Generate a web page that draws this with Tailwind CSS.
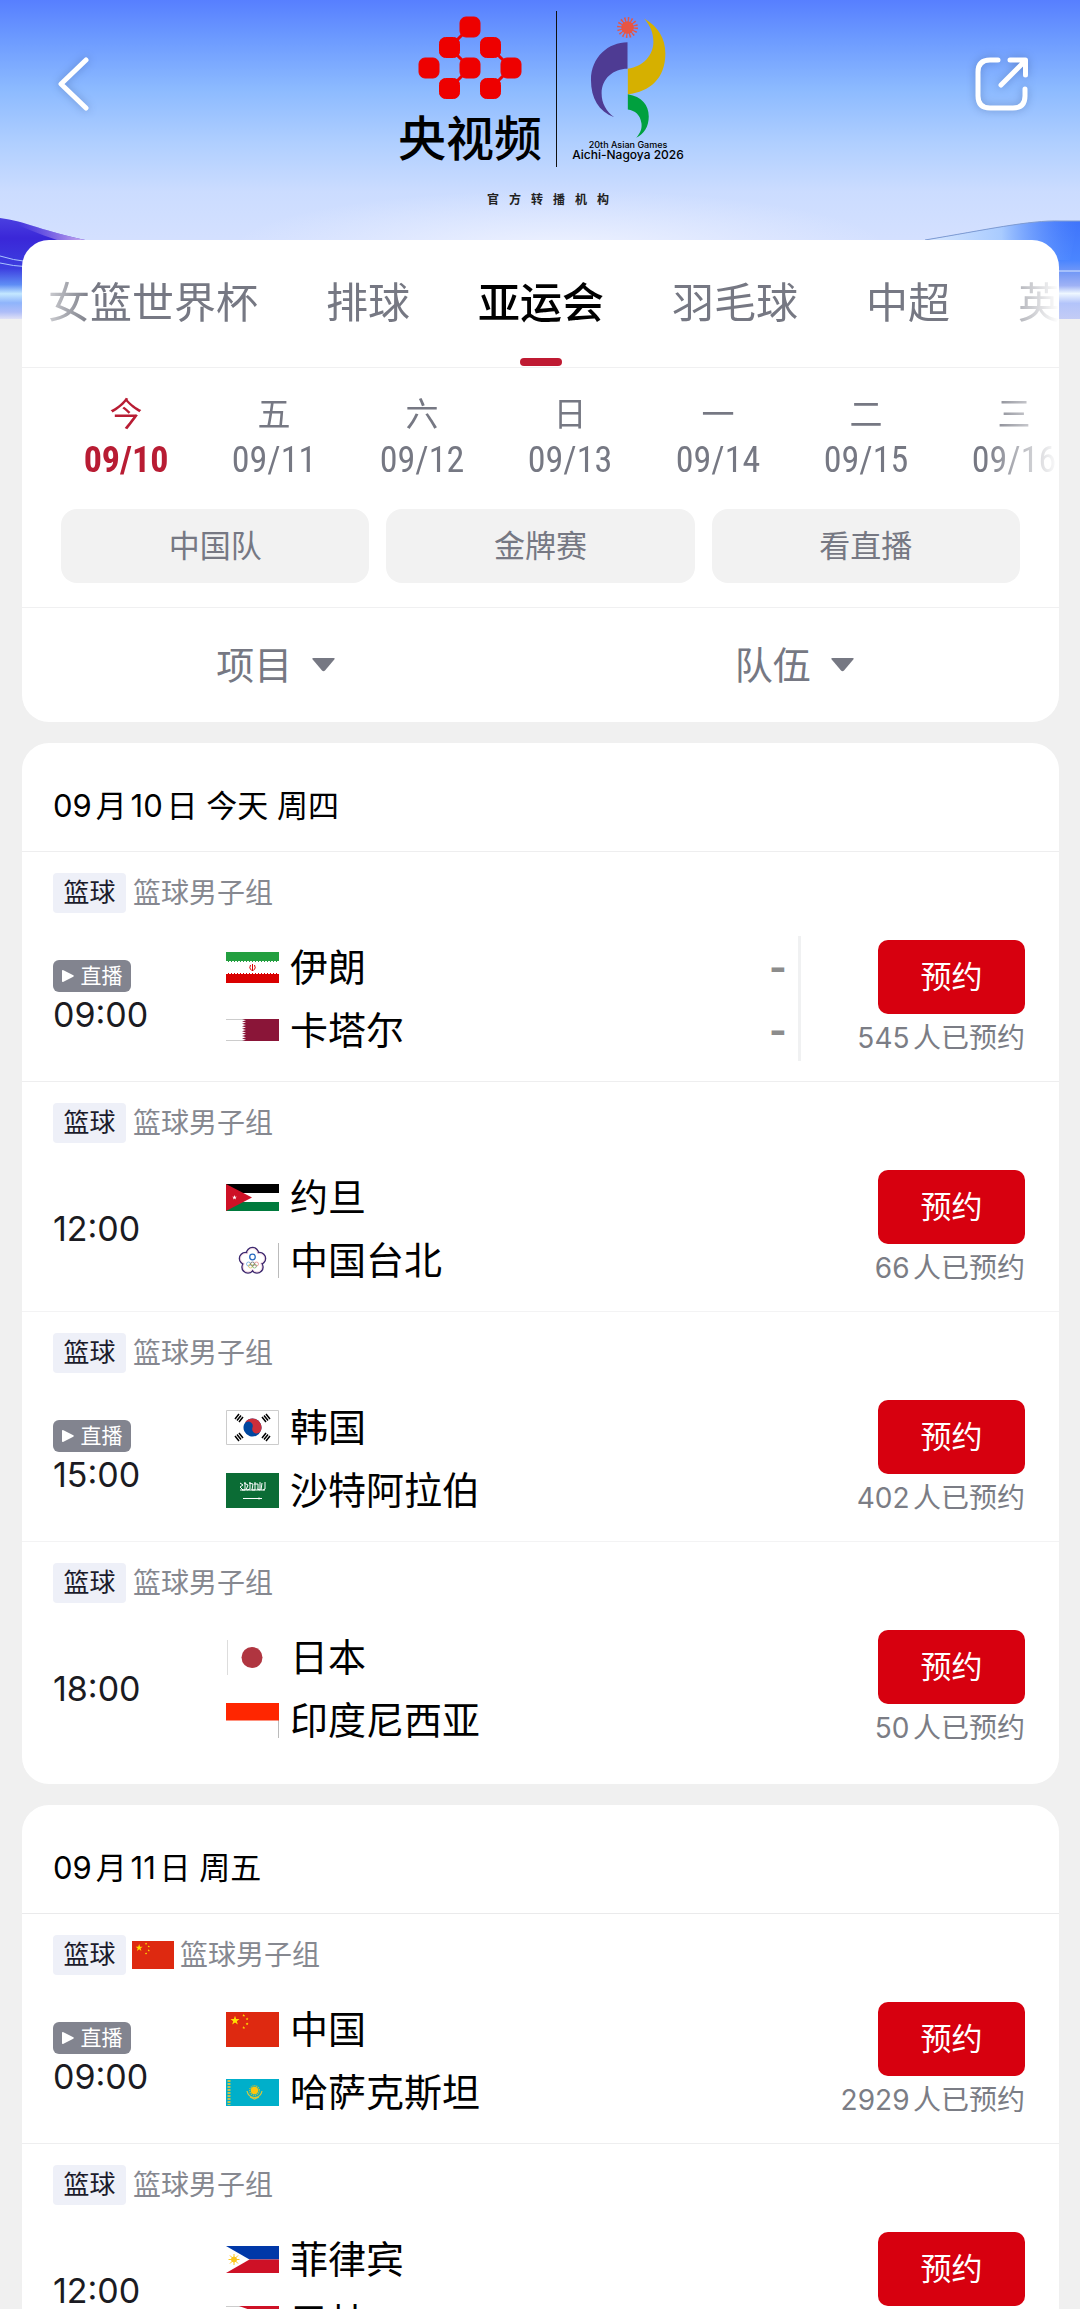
<!DOCTYPE html>
<html lang="zh-CN">
<head>
<meta charset="utf-8">
<meta name="viewport" content="width=device-width, initial-scale=1">
<title>亚运会赛程</title>
<script src="https://cdn.jsdelivr.net/npm/@tailwindcss/browser@4"></script>
</head>
<body class="bg-[#f0f0f0] font-['Inter','Noto_Sans_CJK_SC',sans-serif] text-black [text-autospace:normal]">

<!-- Shared flag artwork -->
<svg class="hidden" aria-hidden="true">
  <symbol id="star" viewBox="-10 -10 20 20"><path d="M0-10 2.4-3.1 9.5-3.1 3.8 1.2 5.9 8.1 0 4-5.9 8.1-3.8 1.2-9.5-3.1-2.4-3.1Z"/></symbol>
  <symbol id="flag-cn" viewBox="0 0 30 20" preserveAspectRatio="none">
    <path fill="#de2910" d="M0 0h30v20H0z"/>
    <g fill="#ffde00"><use href="#star" x="2.4" y="2.2" width="5.4" height="5.4"/><use href="#star" x="9.1" y="1" width="1.9" height="1.9"/><use href="#star" x="11" y="3" width="1.9" height="1.9"/><use href="#star" x="11" y="5.8" width="1.9" height="1.9"/><use href="#star" x="9.1" y="8" width="1.9" height="1.9"/></g>
  </symbol>
</svg>

<div class="relative h-screen overflow-hidden">

  <!-- Hero backdrop -->
  <svg class="absolute inset-x-0 top-0 h-[319px] w-full" viewBox="0 0 1080 319" preserveAspectRatio="none" aria-hidden="true">
    <defs>
      <linearGradient id="sky" x1="0" y1="0" x2="0" y2="1">
        <stop offset="0" stop-color="#577fff"/><stop offset=".12" stop-color="#6c9aff"/><stop offset=".28" stop-color="#8cbaff"/><stop offset=".45" stop-color="#b0cfff"/><stop offset=".6" stop-color="#cbdcff"/><stop offset="1" stop-color="#e2e7ff"/>
      </linearGradient>
      <radialGradient id="glow" cx=".5" cy=".5" r=".5"><stop offset="0" stop-color="#f5f7ff" stop-opacity=".8"/><stop offset="1" stop-color="#f0f3ff" stop-opacity="0"/></radialGradient>
      <linearGradient id="waveL" x1="0" y1="0" x2="0" y2="1">
        <stop offset="0" stop-color="#4a3fe0"/><stop offset=".2" stop-color="#3a27d8"/><stop offset=".5" stop-color="#3d3fe0"/><stop offset=".66" stop-color="#5f8df5"/><stop offset=".75" stop-color="#c4e8ff"/><stop offset=".84" stop-color="#8fb4fb"/><stop offset=".93" stop-color="#aebdf8"/><stop offset="1" stop-color="#e0e1f5"/>
      </linearGradient>
      <linearGradient id="waveR" x1="0" y1="0" x2="0" y2="1">
        <stop offset="0" stop-color="#3f74fb"/><stop offset=".4" stop-color="#4a85ff"/><stop offset=".55" stop-color="#7c9df5"/><stop offset=".66" stop-color="#9fb2f5"/><stop offset=".74" stop-color="#eef7ff"/><stop offset=".84" stop-color="#b3c4fa"/><stop offset="1" stop-color="#c3ccf5"/>
      </linearGradient>
      <linearGradient id="sheen" x1="0" y1="0" x2="1" y2="0"><stop offset="0" stop-color="#d9e8ff"/><stop offset=".5" stop-color="#b4d4ff" stop-opacity=".9"/><stop offset="1" stop-color="#5f94ff" stop-opacity="0"/></linearGradient>
      <linearGradient id="pink" x1="0" y1="0" x2="1" y2="0"><stop offset=".2" stop-color="#a48cf0" stop-opacity="0"/><stop offset="1" stop-color="#dcbcf0"/></linearGradient>
    </defs>
    <path fill="url(#sky)" d="M0 0h1080v319H0z"/>
    <ellipse fill="url(#glow)" cx="560" cy="250" rx="330" ry="60"/>
    <path fill="url(#waveL)" d="M0 218C25 221 45 232 90 241V319H0Z"/>
    <path fill="url(#pink)" d="M0 218C25 221 45 232 90 241H60C38 234 18 225 0 218Z"/>
    <path fill="none" stroke="#a9c4ff" stroke-width="1" d="M0 256Q12 260 30 262M0 263Q12 266 30 267"/>
    <path fill="url(#waveR)" d="M925 240C985 230 1030 220 1060 221H1080V319H925Z"/>
    <path fill="url(#sheen)" d="M925 240C985 230 1030 220 1060 221H1078L1070 260H925Z"/>
    <path fill="none" stroke="#7f9cd2" stroke-width="1" d="M925 240C985 230 1030 220 1060 221H1080"/>
    <path fill="none" stroke="#dbe9ff" stroke-width="1" d="M1050 271H1080"/>
  </svg>

  <header class="relative flex h-[240px] items-start justify-between px-[52px]">
    <button type="button" aria-label="返回" class="mt-[54px] drop-shadow-[0_0_4px_rgba(60,90,150,0.45)]">
      <svg width="42" height="60" viewBox="0 0 42 60" fill="none" stroke="#fff" stroke-width="5" stroke-linecap="round" stroke-linejoin="round"><path d="M34 6 9 30 34 54"/></svg>
    </button>

    <div class="absolute inset-x-0 top-0 mx-auto flex w-[320px] flex-col pt-[11px]">
      <div class="flex h-[156px]">
        <div class="ml-[18px] flex w-[144px] flex-col items-center">
          <svg class="mt-[5px]" width="104" height="84" viewBox="0 0 104 84" fill="#ee0000" aria-label="央视频">
            <g stroke="#ee0000" stroke-width="1">
              <rect x="42" y="1" width="20" height="20" rx="6"/>
              <rect x="21.500" y="21.500" width="20" height="20" rx="6"/><rect x="62.500" y="21.500" width="20" height="20" rx="6"/>
              <rect x="1" y="42" width="20" height="20" rx="6"/><rect x="42" y="42" width="20" height="20" rx="6"/><rect x="83" y="42" width="20" height="20" rx="6"/>
              <rect x="21.500" y="62.500" width="20" height="20" rx="6"/><rect x="62.500" y="62.500" width="20" height="20" rx="6"/>
            </g>
            <g stroke="#ee0000" stroke-width="3"><path d="M44 19 39.500 23.500M39.500 39.500 44 44M44 60 39.500 64.500M80.500 39.500 85 44M85 60 80.500 64.500"/></g>
          </svg>
          <p class="mt-3 text-[48px] leading-[54px] font-medium whitespace-nowrap">央视频</p>
        </div>
        <div class="ml-[14px] w-[1px] bg-[#111]"></div>
        <div class="flex flex-1 flex-col items-center pr-px">
          <svg class="mt-1" width="83" height="125" viewBox="620 45 250 375" aria-hidden="true">
            <path fill="#4e3b93" d="M742 126V206C700 206 664 235 664 280 664 310 678 335 702 352 655 335 632 295 632 240 632 170 685 126 742 126Z"/>
            <path fill="#d6b000" d="M792 55C835 80 856 115 856 160 856 235 810 275 743 283V206C790 200 820 165 820 125 820 100 812 78 792 55Z"/>
            <path fill="#00a03e" d="M743 283C785 290 806 315 806 350 806 380 792 403 768 414 782 398 786 385 784 370 780 345 765 332 743 329Z"/>
            <circle cx="742" cy="82" r="19" fill="#e85543"/>
            <circle cx="742" cy="82" r="24" fill="none" stroke="#e85543" stroke-width="15" stroke-dasharray="4 5.425"/>
          </svg>
          <p class="text-[9px] leading-[9px] font-medium whitespace-nowrap">20th Asian Games</p>
          <p class="text-[12px] leading-[12px] font-medium whitespace-nowrap">Aichi-Nagoya 2026</p>
        </div>
      </div>
      <p class="mt-[24px] pl-[26px] text-center text-[12px] leading-[18px] font-bold tracking-[10px] text-[#222]">官方转播机构</p>
    </div>

    <button type="button" aria-label="分享" class="mt-[54px] -mr-[4px] drop-shadow-[0_0_4px_rgba(60,90,150,0.45)]">
      <svg width="60" height="60" viewBox="0 0 60 60" fill="none" stroke="#fff" stroke-width="5" stroke-linecap="round" stroke-linejoin="round"><path d="M26 6H18Q6 6 6 18V42Q6 54 18 54H41Q53 54 53 42V35"/><path d="M29 31 53 7M38 6H53.500V21"/></svg>
    </button>
  </header>

  <main class="relative mr-[21px] ml-[22px] flex flex-col gap-[21px]">

    <!-- Filters -->
    <section class="overflow-hidden rounded-[27px] bg-white">
      <nav class="border-b border-[#f0f0f1]">
        <div class="flex h-[127px] gap-[68px] overflow-hidden pl-[26px] text-[42px] leading-[126px] whitespace-nowrap text-[#767883] [mask-image:linear-gradient(to_right,transparent,black_70px,black_calc(100%-75px),transparent)]">
          <a href="#" class="shrink-0">女篮世界杯</a>
          <a href="#" class="shrink-0">排球</a>
          <a href="#" aria-current="page" class="relative shrink-0 font-medium text-black">亚运会<span class="absolute bottom-px left-1/2 h-2 w-[42px] -translate-x-1/2 rounded-full bg-[#bf1a32]"></span></a>
          <a href="#" class="shrink-0">羽毛球</a>
          <a href="#" class="shrink-0">中超</a>
          <a href="#" class="shrink-0">英超</a>
        </div>
      </nav>

      <div class="flex h-[141px] overflow-hidden pt-6 pl-[30px] text-center text-[#767883] [mask-image:linear-gradient(to_right,black_calc(100%-75px),transparent)]">
        <a href="#" class="w-[148px] shrink-0 text-[#b81c33]"><span class="block text-[33px] leading-[44px]">今</span><span class="block text-[36px] leading-[48px] font-bold font-['Liberation_Sans_Narrow','Roboto_Condensed','Roboto',sans-serif]">09/10</span></a>
        <a href="#" class="w-[148px] shrink-0"><span class="block text-[33px] leading-[44px]">五</span><span class="block text-[36px] leading-[48px] font-['Liberation_Sans_Narrow','Roboto_Condensed','Roboto',sans-serif]">09/11</span></a>
        <a href="#" class="w-[148px] shrink-0"><span class="block text-[33px] leading-[44px]">六</span><span class="block text-[36px] leading-[48px] font-['Liberation_Sans_Narrow','Roboto_Condensed','Roboto',sans-serif]">09/12</span></a>
        <a href="#" class="w-[148px] shrink-0"><span class="block text-[33px] leading-[44px]">日</span><span class="block text-[36px] leading-[48px] font-['Liberation_Sans_Narrow','Roboto_Condensed','Roboto',sans-serif]">09/13</span></a>
        <a href="#" class="w-[148px] shrink-0"><span class="block text-[33px] leading-[44px]">一</span><span class="block text-[36px] leading-[48px] font-['Liberation_Sans_Narrow','Roboto_Condensed','Roboto',sans-serif]">09/14</span></a>
        <a href="#" class="w-[148px] shrink-0"><span class="block text-[33px] leading-[44px]">二</span><span class="block text-[36px] leading-[48px] font-['Liberation_Sans_Narrow','Roboto_Condensed','Roboto',sans-serif]">09/15</span></a>
        <a href="#" class="w-[148px] shrink-0"><span class="block text-[33px] leading-[44px]">三</span><span class="block text-[36px] leading-[48px] font-['Liberation_Sans_Narrow','Roboto_Condensed','Roboto',sans-serif]">09/16</span></a>
      </div>

      <div class="grid grid-cols-3 gap-[17px] border-b border-[#f0f0f1] px-[39px] pb-6 text-[31px] leading-[74px] text-[#767883]">
        <button type="button" class="rounded-2xl bg-[#f2f2f2]">中国队</button>
        <button type="button" class="rounded-2xl bg-[#f2f2f2]">金牌赛</button>
        <button type="button" class="rounded-2xl bg-[#f2f2f2]">看直播</button>
      </div>

      <div class="grid h-[114px] grid-cols-2 text-[38px] leading-[56px] text-[#767883]">
        <label class="flex items-center justify-center gap-[19px] pr-[11px]">
          <select aria-label="项目" class="appearance-none bg-transparent"><option>项目</option></select>
          <svg width="23" height="14" viewBox="0 0 23 14" fill="#767883" aria-hidden="true"><path d="M1.500 0h20q2 0 .8 1.500L13 12.500q-1.500 1.500-3 0L.7 1.500Q-.5 0 1.500 0Z"/></svg>
        </label>
        <label class="flex items-center justify-center gap-[19px] pr-[11px]">
          <select aria-label="队伍" class="appearance-none bg-transparent"><option>队伍</option></select>
          <svg width="23" height="14" viewBox="0 0 23 14" fill="#767883" aria-hidden="true"><path d="M1.500 0h20q2 0 .8 1.500L13 12.500q-1.500 1.500-3 0L.7 1.500Q-.5 0 1.500 0Z"/></svg>
        </label>
      </div>
    </section>

    <!-- 09月10日 -->
    <section class="rounded-[27px] bg-white pb-[13px]">
      <h2 class="h-[108px] px-[31px] pt-[41px] text-[31px] leading-[44px]">09月10日 今天 周四</h2>

      <article class="border-t border-[#eeeeef] pt-[21px] pr-[34px] pb-5 pl-[31px]">
        <div class="flex h-10 items-center gap-[7px] text-[28px] leading-10 text-[#868890]"><span class="w-[73px] rounded bg-[#eef0f8] text-center text-[26px] text-[#1b1b2b]">篮球</span>篮球男子组</div>
        <div class="mt-[23px] flex h-[125px]">
          <div class="flex w-[173px] flex-col justify-center">
            <span class="flex h-8 w-[78px] items-center justify-center gap-[7px] rounded-md bg-[#82848f] text-[21px] leading-8 text-white"><svg width="12" height="12" viewBox="0 0 12 12" fill="#fff" aria-hidden="true"><path d="M0 1Q0-.5 1.500.3L11.300 5.300q1 .7 0 1.400L1.500 11.700Q0 12.500 0 11Z"/></svg>直播</span>
            <time class="text-[34px] leading-[46px] text-[#1b1b22]">09:00</time>
          </div>
          <div class="flex flex-1 flex-col justify-center text-[38px] leading-[63px]">
            <div class="flex items-center gap-[11px]">
              <svg width="53" height="31" viewBox="0 0 53 31" role="img" aria-label="伊朗国旗"><path fill="#fff" d="M0 0h53v31H0z"/><path fill="#239f40" d="M0 0h53v10H0z"/><path fill="#da0000" d="M0 21h53v10H0z"/><path stroke="#fff" stroke-width="1" stroke-dasharray="2 1" d="M0 9.500h53M0 21.500h53"/><path fill="none" stroke="#da0000" d="M26.500 12v7M24.500 13q-2 3 1 5.500M28.500 13q2 3-1 5.500"/></svg>伊朗
            </div>
            <div class="flex items-center gap-[11px]">
              <svg width="53" height="22" viewBox="0 0 53 22" role="img" aria-label="卡塔尔国旗"><path fill="#fff" d="M0 0h53v22H0z"/><path stroke="#ccc" d="M0 .5h20M0 21.500h20"/><path fill="#8a1538" d="M53 0H16l4 1.200-4 1.200 4 1.200-4 1.200 4 1.200-4 1.300 4 1.200-4 1.200 4 1.200-4 1.300 4 1.200-4 1.200 4 1.200-4 1.200 4 1.200-4 1.300 4 1.200L16 22H53Z"/></svg>卡塔尔
            </div>
          </div>
          <div class="flex w-[29px] flex-col justify-center text-[38px] leading-[63px] font-bold text-[#8c8c8c]"><span>-</span><span>-</span></div>
          <div class="w-[3px] bg-[#f0f1f2]"></div>
          <div class="flex w-[224px] flex-col items-end justify-center gap-[5px]">
            <button type="button" class="w-[147px] rounded-[10px] bg-[#d7000f] text-[31px] leading-[74px] text-white">预约</button>
            <p class="text-[28px] leading-[38px] text-[#7b7d85]">545人已预约</p>
          </div>
        </div>
      </article>

      <article class="border-t border-[#eeeeef] pt-[21px] pr-[34px] pb-5 pl-[31px]">
        <div class="flex h-10 items-center gap-[7px] text-[28px] leading-10 text-[#868890]"><span class="w-[73px] rounded bg-[#eef0f8] text-center text-[26px] text-[#1b1b2b]">篮球</span>篮球男子组</div>
        <div class="mt-[23px] flex h-[125px]">
          <div class="flex w-[173px] flex-col justify-center">
            <time class="text-[34px] leading-[46px] text-[#1b1b22]">12:00</time>
          </div>
          <div class="flex flex-1 flex-col justify-center text-[38px] leading-[63px]">
            <div class="flex items-center gap-[11px]">
              <svg width="53" height="27" viewBox="0 0 53 27" role="img" aria-label="约旦国旗"><path fill="#fff" d="M0 0h53v27H0z"/><path fill="#000" d="M0 0h53v9H0z"/><path fill="#007a3d" d="M0 18h53v9H0z"/><path fill="#ce1126" d="M0 0 26 13.500 0 27Z"/><use href="#star" x="6" y="11" width="5" height="5" fill="#fff"/></svg>约旦
            </div>
            <div class="flex items-center gap-[11px]">
              <svg width="53" height="35" viewBox="0 0 53 35" role="img" aria-label="中国台北会旗"><path stroke="#bbb" d="M52.500 0v35"/><g fill="#fff"><g stroke="#3d2a70" stroke-width="1.600"><circle cx="26.500" cy="10.500" r="6"/><circle cx="33.500" cy="15.500" r="6"/><circle cx="31" cy="24" r="6"/><circle cx="22" cy="24" r="6"/><circle cx="19.500" cy="15.500" r="6"/></g><g stroke="#e9c3d3" stroke-width=".8"><circle cx="26.500" cy="10.500" r="5"/><circle cx="33.500" cy="15.500" r="5"/><circle cx="31" cy="24" r="5"/><circle cx="22" cy="24" r="5"/><circle cx="19.500" cy="15.500" r="5"/></g><circle cx="26.500" cy="17.500" r="8.500"/></g><circle cx="26.500" cy="14" r="2.800" fill="#fff" stroke="#2a6ac0" stroke-width="1.300"/><g fill="none" stroke-width=".6"><circle cx="22.500" cy="21" r="2" stroke="#3f8fd0"/><circle cx="26.500" cy="21" r="2" stroke="#444"/><circle cx="30.500" cy="21" r="2" stroke="#d66"/><circle cx="24.500" cy="23" r="2" stroke="#d9b230"/><circle cx="28.500" cy="23" r="2" stroke="#5a9f50"/></g></svg>中国台北
            </div>
          </div>
          <div class="flex w-[224px] flex-col items-end justify-center gap-[5px]">
            <button type="button" class="w-[147px] rounded-[10px] bg-[#d7000f] text-[31px] leading-[74px] text-white">预约</button>
            <p class="text-[28px] leading-[38px] text-[#7b7d85]">66人已预约</p>
          </div>
        </div>
      </article>

      <article class="border-t border-[#f3f3f4] pt-[21px] pr-[34px] pb-5 pl-[31px]">
        <div class="flex h-10 items-center gap-[7px] text-[28px] leading-10 text-[#868890]"><span class="w-[73px] rounded bg-[#eef0f8] text-center text-[26px] text-[#1b1b2b]">篮球</span>篮球男子组</div>
        <div class="mt-[23px] flex h-[125px]">
          <div class="flex w-[173px] flex-col justify-center">
            <span class="flex h-8 w-[78px] items-center justify-center gap-[7px] rounded-md bg-[#82848f] text-[21px] leading-8 text-white"><svg width="12" height="12" viewBox="0 0 12 12" fill="#fff" aria-hidden="true"><path d="M0 1Q0-.5 1.500.3L11.300 5.300q1 .7 0 1.400L1.500 11.700Q0 12.500 0 11Z"/></svg>直播</span>
            <time class="text-[34px] leading-[46px] text-[#1b1b22]">15:00</time>
          </div>
          <div class="flex flex-1 flex-col justify-center text-[38px] leading-[63px]">
            <div class="flex items-center gap-[11px]">
              <svg width="53" height="35" viewBox="0 0 53 35" role="img" aria-label="韩国国旗"><path fill="#fff" stroke="#ccc" d="M.5.5h52v34H.5z"/><g transform="rotate(20 26.500 17.500)"><circle cx="26.500" cy="17.500" r="9" fill="#0047a0"/><path fill="#cd2e3a" d="M17.500 17.500a9 9 0 0 1 18 0 4.500 4.500 0 0 1-9 0 4.500 4.500 0 0 0-9 0Z"/></g><g stroke="#000" stroke-width="1.500"><path d="M9 9l4-5M11 10.500l4-5M13 12l4-5M36 7l4 5M38 5.500l4 5M40 4l4 5M9 26l4 5M11 24.500l4 5M13 23l4 5M36 28l4-5M38 29.500l4-5M40 31l4-5"/></g></svg>韩国
            </div>
            <div class="flex items-center gap-[11px]">
              <svg width="53" height="35" viewBox="0 0 53 35" role="img" aria-label="沙特阿拉伯国旗"><path fill="#0b6c35" d="M0 0h53v35H0z"/><g fill="none" stroke="#fff" stroke-width="1"><path d="M14 10l3 2-3 2 3 3M19 9v8h-3M18 10l4 2-2 5M24 9v7l-3 1M23 10l4 1-1 6M29 9v8h-3M28 11h4v5M34 9v8l-3-1M36 10l-1 7M39 9v7l-2 1M14 17h25"/><path d="M17 25.500h19M33 24.500v2"/></g></svg>沙特阿拉伯
            </div>
          </div>
          <div class="flex w-[224px] flex-col items-end justify-center gap-[5px]">
            <button type="button" class="w-[147px] rounded-[10px] bg-[#d7000f] text-[31px] leading-[74px] text-white">预约</button>
            <p class="text-[28px] leading-[38px] text-[#7b7d85]">402人已预约</p>
          </div>
        </div>
      </article>

      <article class="border-t border-[#f3f3f4] pt-[21px] pr-[34px] pb-5 pl-[31px]">
        <div class="flex h-10 items-center gap-[7px] text-[28px] leading-10 text-[#868890]"><span class="w-[73px] rounded bg-[#eef0f8] text-center text-[26px] text-[#1b1b2b]">篮球</span>篮球男子组</div>
        <div class="mt-[23px] flex h-[125px]">
          <div class="flex w-[173px] flex-col justify-center">
            <time class="text-[34px] leading-[46px] text-[#1b1b22]">18:00</time>
          </div>
          <div class="flex flex-1 flex-col justify-center text-[38px] leading-[63px]">
            <div class="flex items-center gap-[11px]">
              <svg width="53" height="35" viewBox="0 0 53 35" role="img" aria-label="日本国旗"><path stroke="#ddd" d="M1.500 0v35"/><circle cx="26" cy="17.500" r="10.500" fill="#b03540"/></svg>日本
            </div>
            <div class="flex items-center gap-[11px]">
              <svg width="53" height="35" viewBox="0 0 53 35" role="img" aria-label="印度尼西亚国旗"><path stroke="#bbb" d="M52.500 0v35"/><path fill="#ff2600" d="M0 0h53v17.500H0z"/></svg>印度尼西亚
            </div>
          </div>
          <div class="flex w-[224px] flex-col items-end justify-center gap-[5px]">
            <button type="button" class="w-[147px] rounded-[10px] bg-[#d7000f] text-[31px] leading-[74px] text-white">预约</button>
            <p class="text-[28px] leading-[38px] text-[#7b7d85]">50人已预约</p>
          </div>
        </div>
      </article>
    </section>

    <!-- 09月11日 -->
    <section class="rounded-[27px] bg-white pb-[13px]">
      <h2 class="h-[108px] px-[31px] pt-[41px] text-[31px] leading-[44px]">09月11日 周五</h2>

      <article class="border-t border-[#eaeaeb] pt-[21px] pr-[34px] pb-5 pl-[31px]">
        <div class="flex h-10 items-center gap-[6px] text-[28px] leading-10 text-[#868890]"><span class="w-[73px] rounded bg-[#eef0f8] text-center text-[26px] text-[#1b1b2b]">篮球</span><svg width="42" height="28" role="img" aria-label="中国国旗"><use href="#flag-cn" width="42" height="28"/></svg>篮球男子组</div>
        <div class="mt-[23px] flex h-[125px]">
          <div class="flex w-[173px] flex-col justify-center">
            <span class="flex h-8 w-[78px] items-center justify-center gap-[7px] rounded-md bg-[#82848f] text-[21px] leading-8 text-white"><svg width="12" height="12" viewBox="0 0 12 12" fill="#fff" aria-hidden="true"><path d="M0 1Q0-.5 1.500.3L11.300 5.300q1 .7 0 1.400L1.500 11.700Q0 12.500 0 11Z"/></svg>直播</span>
            <time class="text-[34px] leading-[46px] text-[#1b1b22]">09:00</time>
          </div>
          <div class="flex flex-1 flex-col justify-center text-[38px] leading-[63px]">
            <div class="flex items-center gap-[11px]">
              <svg width="53" height="35" role="img" aria-label="中国国旗"><use href="#flag-cn" width="53" height="35"/></svg>中国
            </div>
            <div class="flex items-center gap-[11px]">
              <svg width="53" height="27" viewBox="0 0 53 27" role="img" aria-label="哈萨克斯坦国旗"><path fill="#00afca" d="M0 0h53v27H0z"/><path stroke="#c9c04a" stroke-width="3" stroke-dasharray="2 1" d="M3 1v25"/><circle cx="28.500" cy="11.500" r="3.700" fill="#fec50c"/><circle cx="28.500" cy="11.500" r="4.800" fill="none" stroke="#fec50c" stroke-width="1.200" stroke-dasharray="1 1"/><path fill="none" stroke="#d9c83a" stroke-width="1.200" d="M21 12q1 6 7.500 6.500Q35 18 36 12M24 18l4.500 2 4.500-2"/></svg>哈萨克斯坦
            </div>
          </div>
          <div class="flex w-[224px] flex-col items-end justify-center gap-[5px]">
            <button type="button" class="w-[147px] rounded-[10px] bg-[#d7000f] text-[31px] leading-[74px] text-white">预约</button>
            <p class="text-[28px] leading-[38px] text-[#7b7d85]">2929人已预约</p>
          </div>
        </div>
      </article>

      <article class="border-t border-[#eeeeef] pt-[21px] pr-[34px] pb-5 pl-[31px]">
        <div class="flex h-10 items-center gap-[7px] text-[28px] leading-10 text-[#868890]"><span class="w-[73px] rounded bg-[#eef0f8] text-center text-[26px] text-[#1b1b2b]">篮球</span>篮球男子组</div>
        <div class="mt-[23px] flex h-[125px]">
          <div class="flex w-[173px] flex-col justify-center">
            <time class="text-[34px] leading-[46px] text-[#1b1b22]">12:00</time>
          </div>
          <div class="flex flex-1 flex-col justify-center text-[38px] leading-[63px]">
            <div class="flex items-center gap-[11px]">
              <svg width="53" height="27" viewBox="0 0 53 27" role="img" aria-label="菲律宾国旗"><path fill="#0038a8" d="M0 0h53v13.500H0z"/><path fill="#ce1126" d="M0 13.500h53V27H0z"/><path fill="#fff" d="M0 0 23.500 13.500 0 27Z"/><g stroke="#fcc61a" stroke-width="1"><circle cx="8" cy="13.500" r="2.500" fill="#fcc61a"/><path d="M8 8v11M2.500 13.500h11M4 9.500l8 8M12 9.500l-8 8"/></g></svg>菲律宾
            </div>
            <div class="flex items-center gap-[11px]">
              <svg width="53" height="32" viewBox="0 0 53 32" role="img" aria-label="巴林国旗"><path stroke="#ccc" d="M0 .5h20"/><path fill="#ce1126" d="M53 0H13l9 3.200-9 3.200 9 3.200-9 3.200 9 3.200-9 3.200 9 3.200-9 3.200 9 3.200L13 32H53Z"/></svg>巴林
            </div>
          </div>
          <div class="flex w-[224px] flex-col items-end justify-center gap-[5px]">
            <button type="button" class="w-[147px] rounded-[10px] bg-[#d7000f] text-[31px] leading-[74px] text-white">预约</button>
            <p class="text-[28px] leading-[38px] text-[#7b7d85]">38人已预约</p>
          </div>
        </div>
      </article>
    </section>
  </main>
</div>
</body>
</html>
